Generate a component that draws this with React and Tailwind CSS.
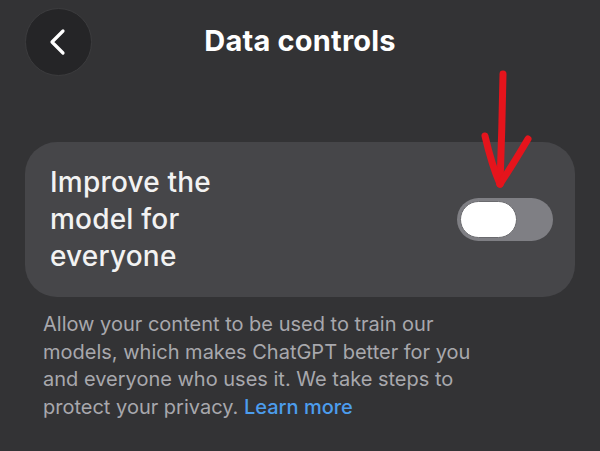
export default function App() {
  return (
    <div
      className="relative w-[600px] h-[451px] overflow-hidden bg-[#333335] text-white"
      style={{ fontFamily: "Inter, 'Noto Sans', sans-serif" }}
    >
      <div className="relative flex items-center h-[79px] pl-[25px] pt-[5px]">
        <button className="flex items-center justify-center w-[67px] h-[68px] rounded-full bg-[#252527] border border-[#3c3c3e]">
          <svg width="24" height="28" viewBox="0 0 24 28" fill="none">
            <path d="M14 3 L3 14 L14 25" stroke="white" strokeWidth="3.2" strokeLinecap="round" strokeLinejoin="round" transform="translate(2 0)" />
          </svg>
        </button>
        <div className="absolute left-0 right-0 top-[19px] text-center text-[29px] font-bold tracking-[0.2px] pointer-events-none">
          Data controls
        </div>
      </div>

      <div className="mt-[63px] mx-[25px] h-[155px] rounded-[32px] bg-[#464649] flex items-center justify-between pl-[25px] pr-[22px]">
        <div className="text-[28px] leading-[37px] font-medium text-[#f2f2f2] w-[200px] tracking-[0.2px]">
          Improve the
          <br />
          model for
          <br />
          everyone
        </div>
        <div className="relative w-[96px] h-[43px] rounded-full bg-[#7f7f84]">
          <div className="absolute left-[3px] top-[3px] w-[57px] h-[37px] rounded-full bg-white border border-[#6a6a6e]" />
        </div>
      </div>

      <p className="mt-[14px] ml-[43px] w-[452px] text-[20px] leading-[27.5px] text-[#a8a8ad] tracking-[0px]">
        Allow your content to be used to train our models, which makes ChatGPT better for you and everyone who uses it. We take steps to protect your privacy.{" "}
        <span className="text-[#4c9ded] font-medium">Learn more</span>
      </p>

      <svg className="absolute left-0 top-0 pointer-events-none" width="600" height="451" viewBox="0 0 600 451" fill="none">
        <g stroke="#e5141c" strokeWidth="7" strokeLinecap="round" strokeLinejoin="round">
          <path d="M503 74 Q502 130 500 184" />
          <path d="M485 136 Q492 166 500 184" />
          <path d="M528 139 Q512 166 500 184" />
        </g>
      </svg>
    </div>
  );
}
